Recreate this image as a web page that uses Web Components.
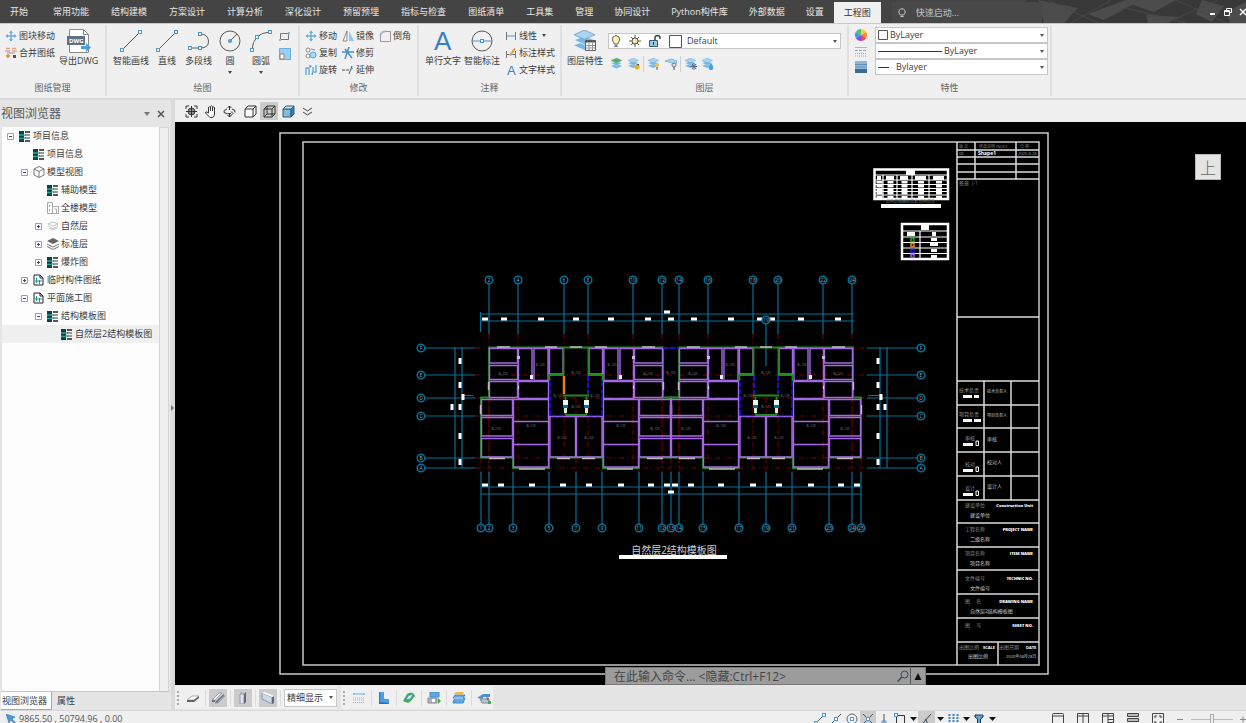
<!DOCTYPE html>
<html lang="zh-CN">
<head>
<meta charset="utf-8">
<title>结构施工图</title>
<style>
html,body{margin:0;height:100%;background:#f0f0f0}
body{font:9px/12px "Open Sans","Noto Sans CJK SC",sans-serif;color:#3c3c3c;overflow:hidden}
</style>
</head>
<body>
<cad-app></cad-app>
<script>
const BASE = `*{box-sizing:border-box}
button,input,select{font:inherit;color:inherit;border:0;background:none;margin:0;padding:0;outline:0;border-radius:0}
svg{display:block}`;

function define(name, css, html, setup) {
  customElements.define(name, class extends HTMLElement {
    constructor() { super(); this.attachShadow({mode: 'open'}); }
    connectedCallback() {
      const body = typeof html === 'function' ? html(this) : html;
      this.shadowRoot.innerHTML = `<style>${BASE}${css}</style>${body}`;
      if (setup) setup(this);
    }
  });
}

/* ---------- icons: [width, height, markup] ---------- */
const B = '#4a9ad4', G = '#5a5a5a';
const node = (x, y) => `<rect x="${x-1.5}" y="${y-1.5}" width="3" height="3" fill="#fff" stroke="${B}"/>`;
const layers = (s, a='#a8d4f0', b='#76b8e6') => `<g transform="scale(${s})"><path d="M0 16l11-4 11 4-11 5z" fill="${b}"/><path d="M0 10.500l11-4 11 4-11 5z" fill="${b}" stroke="#f0f0f0" stroke-width=".8"/><path d="M0 5l11-5 11 5-11 5z" fill="${a}" stroke="#5f9cc8" stroke-width=".8"/></g>`;
const tealList = `<g><rect x="0" y="0" width="5" height="11" fill="#0e3f44"/><path d="M0 4h5M0 7.500h5" stroke="#2aa39a" stroke-width="1.500"/><path d="M6 1h5M6 10h5" stroke="#222" stroke-width="1.500"/><path d="M6 4h5M6 7h5" stroke="#9a9a9a" stroke-width="2"/><path d="M4 4h3M4 7h3" stroke="#138a84"/></g>`;
const cube = `<path d="M1 4h8v8H1zM1 4l3-3h8l-3 3M12 1v8l-3 3" fill="none" stroke="#333"/>`;
const ICONS = {
  move: [12,12,`<path d="M6 1v10M1 6h10" stroke="#6aaee0" stroke-width="1.500"/><path d="M4 3l2-2.500L8 3zM4 9l2 2.500L8 9zM3 4L.5 6 3 8zM9 4l2.500 2L9 8z" fill="#6aaee0"/>`],
  merge: [12,12,`<path d="M1 1.500h4M7 1.500h4M0 4h5M7 4h5" stroke="#e8a090" stroke-width="1.500"/><path d="M2 6h8" stroke="#999"/><path d="M1 9h4M3 7v4" stroke="#d89020" stroke-width="1.500"/><path d="M8 8h3v3H8z" fill="#555"/>`],
  dwg: [24,25,`<path d="M2.500.5h14l5 5v18h-19z" fill="#fff" stroke="#8a8a8a"/><path d="M16.500.5v5h5" fill="none" stroke="#8a8a8a"/><rect x="0" y="7" width="18" height="9" fill="#5f7186"/><text x="2" y="14" font-size="6" font-weight="700" fill="#fff" font-family="Open Sans">DWG</text><path d="M14 17h5v-3l5 4.500-5 4.500v-3h-5z" fill="#4a9fe4"/>`],
  line: [22,22,`<path d="M2 20L20 2" stroke="${G}"/>${node(2,20)}${node(20,2)}`],
  pline: [22,22,`<path d="M2 18h10M12 4q8 0 8.500 7T12 18" fill="none" stroke="${G}"/>${node(12,4)}${node(2,18)}${node(12,18)}`],
  circle: [22,22,`<circle cx="11" cy="11" r="10" fill="none" stroke="${G}"/><path d="M11 11l7-7" stroke="${G}"/><circle cx="11" cy="11" r="2" fill="${B}"/>`],
  arc: [22,22,`<path d="M2 20Q3 3 20 2" fill="none" stroke="${G}"/>${node(2,20)}${node(7,7)}${node(20,2)}`],
  rect: [12,12,`<path d="M1.500 3.500h8v6h-8z" fill="none" stroke="#777"/><path d="M9 2h2v2H9zM0 9h2v2H0z" fill="#8ab8d8"/>`],
  region: [12,12,`<path d="M.5.5h11v11H.5z" fill="#9ad0f4" stroke="#6aaee0"/><path d="M1 6h4v5H1z" fill="#fff" stroke="#888"/>`],
  mirror: [12,12,`<path d="M5 1v10H1z" fill="#fff" stroke="#888"/><path d="M7 1v10h5z" fill="#8fc8f0"/>`],
  fillet: [12,12,`<path d="M1.500 11.500V6Q2 2 7 1.500h4.500v10z" fill="none" stroke="#999"/><path d="M1 6Q1 1 7 1" fill="none" stroke="#7ab8e8"/>`],
  copy: [12,12,`<circle cx="3" cy="3" r="2" fill="#fff" stroke="#888"/><circle cx="3" cy="9" r="2" fill="#fff" stroke="#888"/><circle cx="8" cy="8" r="3" fill="#a8d8f8" stroke="#5aa4dc"/><path d="M6 2l4 1" stroke="${B}"/>`],
  trim: [12,12,`<path d="M0 5h12M7 0l-4 12M3 2l7 9" stroke="#4a90cc" stroke-width="1.500"/>`],
  rotate: [12,12,`<path d="M1 11V4h3v7M11 1v7H8V3" fill="none" stroke="#6aaee0" stroke-width="1.500"/><path d="M4 1l3 1-2 2zM8 11l-2-1 2-2z" fill="#4a90cc"/>`],
  extend: [12,12,`<path d="M0 6h3M4 6h3M10 2L7 10" stroke="#555"/><path d="M8 6l3-2" stroke="${B}"/>`],
  bigA: [22,24,`<text x="2" y="21" font-size="26" fill="#3480c8" font-family="Liberation Sans">A</text>`],
  smallA: [12,12,`<text x="2" y="11" font-size="13" fill="#3480c8" font-family="Liberation Sans">A</text>`],
  smartdim: [22,22,`<circle cx="11" cy="11" r="10" fill="none" stroke="${G}"/><path d="M1 11h20" stroke="${B}"/>${node(11,11)}`],
  linear: [12,12,`<path d="M1.500 2v8M10.500 2v8" stroke="#777"/><path d="M2 6h8" stroke="${B}"/>`],
  dimstyle: [12,12,`<path d="M1.500 4v7M10.500 4v7M2 7.500h8" stroke="#777"/><path d="M4 8l5-7 2 1-5 7z" fill="#e8a050"/>`],
  layerprops: [22,22,`${layers(.95)}<path d="M11.500 10.500h10v10h-10z" fill="#fff" stroke="#666"/><path d="M11 11.500h11" stroke="#555" stroke-width="2"/><path d="M15 12v8M18.500 12v8M12 15.500h9M12 18h9" stroke="#999"/>`],
  ly1: [12,12,layers(.5,'#58b060')],
  ly2: [12,12,layers(.48)+`<circle cx="9" cy="9" r="2.500" fill="#e8b020"/><path d="M8 6h3v2" fill="#555"/>`],
  ly3: [12,12,layers(.48)+`<circle cx="9" cy="7" r="2" fill="#f0c040"/><path d="M9 9v3" stroke="#555"/>`],
  ly4: [12,12,`<path d="M0 3l6-2 6 2-1 3-4-1z" fill="#a8d4f0" stroke="#88b8dc"/><circle cx="9" cy="7" r="2" fill="#dfeaf2" stroke="#678"/><path d="M9 9v3" stroke="#555"/>`],
  ly5: [12,12,layers(.48)+`<path d="M9 5v7M5.500 8.500h7M7 6l4 5M11 6l-4 5" stroke="#4a6a90"/>`],
  ly6: [12,12,layers(.48)+`<path d="M9 5q4 5 1 7h-2q-3-2 1-7z" fill="#48a0e0"/>`],
  bulb: [10,12,`<path d="M3 8Q0 5 2 2q3-3 6 0 2 3-1 6v1H3z" fill="#fdf0b8" stroke="#666"/><path d="M3.500 11h3" stroke="#555" stroke-width="1.500"/>`],
  sun: [12,12,`<path d="M6 0v12M0 6h12M2 2l8 8M10 2l-8 8" stroke="#555"/><circle cx="6" cy="6" r="3" fill="#ffe9a0" stroke="#555"/>`],
  unlock: [12,12,`<path d="M.5 5.500h8v6h-8z" fill="#8fcdf0" stroke="#456"/><path d="M6 5V3q0-2.500 2.500-2.500T11 3v1" fill="none" stroke="#345" stroke-width="1.500"/><path d="M4.500 7v3" stroke="#234"/>`],
  swatch: [13,13,`<path d="M.5.5h12v12H.5z" fill="#fff" stroke="#555"/>`],
  swatchs: [10,10,`<path d="M.5.5h9v9h-9z" fill="#fff" stroke="#555"/>`],
  wheel: [12,12,`<path d="M6 6V0a6 6 0 0 1 5.200 3z" fill="#f0d040"/><path d="M6 6l5.200-3a6 6 0 0 1 0 6z" fill="#f09030"/><path d="M6 6l5.200 3A6 6 0 0 1 6 12z" fill="#f04858"/><path d="M6 6v6A6 6 0 0 1 .8 9z" fill="#9048e0"/><path d="M6 6L.8 9a6 6 0 0 1 0-6z" fill="#30a0e8"/><path d="M6 6L.8 3A6 6 0 0 1 6 0z" fill="#50c070"/>`],
  ltype: [12,12,`<path d="M0 2.500h12" stroke="#aab8c4"/><path d="M0 5.500h12" stroke="#9ab" stroke-dasharray="3 1"/><path d="M0 8.500h12M0 11h12" stroke="#9ab" stroke-dasharray="1 1"/>`],
  lweight: [12,12,`<path d="M0 0h12v12H0z" fill="#8fb8d8"/><path d="M0 3.500h12M0 6h12" stroke="#5f90b8"/><path d="M0 9h12M0 11h12" stroke="#3a6a98" stroke-width="2"/>`],
  zoomext: [13,13,`<path d="M1 4V1h3M9 1h3v3M12 9v3H9M4 12H1V9M6.500 1v11M1 6.500h11" fill="none" stroke="#333"/><circle cx="6.500" cy="6.500" r="3.500" fill="none" stroke="#333"/><path d="M4 4h5v5H4z" fill="#333" opacity=".5"/>`],
  hand: [13,13,`<path d="M4.500 8V2.500q1-1.500 2 0V6 1.500q1-1.500 2 0V6 2.500q1.500-1 2 0V9q0 3-2.500 3.500H6L1.500 8q0-1.500 1.500-1z" fill="#fff" stroke="#333"/>`],
  orbit: [13,13,`<path d="M6.500 1v4M6.500 8v4M4.500 3l2-2 2 2M4.500 10l2 2 2-2M4 4Q0 5 1 7.500q3 2 7 1M9 4q4 1 3 3.500" fill="none" stroke="#333"/><path d="M8 6.500l2 2-2 2" fill="none" stroke="#333"/>`],
  cube: [13,13,cube.replace('fill="none"','fill="#fff"')],
  wire: [13,13,cube+`<path d="M4 1v8h8M4 9l-3 3" fill="none" stroke="#333"/>`],
  solid: [13,13,`<path d="M1 4h8v8H1z" fill="#7fbddc" stroke="#2f5f80"/><path d="M1 4l3-3h8l-3 3z" fill="#c0e0f0" stroke="#2f5f80"/><path d="M12 1v8l-3 3V4z" fill="#3a80a8" stroke="#2f5f80"/>`],
  more: [13,13,`<path d="M2 3l4.500 3L11 3M2 7l4.500 3L11 7" fill="none" stroke="#444"/>`],
  list: [11,11,tealList],
  cubes: [12,12,`<path d="M1 3l5-2.500L11 3v6l-5 2.500L1 9zM1 3l5 2.500L11 3M6 5.500V11" fill="#fff" stroke="#777"/>`],
  building: [12,12,`<path d="M.5.5h5v11h-5zM5.500 4.500h6v7h-6zM7.500 7h2v4M2.500 3v2M2.500 7v2" fill="none" stroke="#aaa"/>`],
  natural: [12,12,`<path d="M1 4l5-2 5 2-5 2zM1 6l5 3 5-3M2 8l4 2 4-2" fill="none" stroke="#c4c4c4"/>`],
  std: [12,12,`<path d="M0 3l6-3 6 3-6 3z" fill="#666"/><path d="M0 6l6 3 6-3M0 8.500l6 3 6-3" fill="none" stroke="#777"/>`],
  doc: [11,12,`<path d="M1 1h6l3 3v7H1z" fill="#fff" stroke="#222"/><path d="M7 1v3h3" fill="none" stroke="#222"/><path d="M3.500 4v5M2 7h7M6.500 6v4" stroke="#1a9a90"/>`],
  minus: [7,7,`<path d="M.5.5h6v6h-6z" fill="#fff" stroke="#a0a0a0"/><path d="M2 3.500h3" stroke="#2a4aa0"/>`],
  plus: [7,7,`<path d="M.5.5h6v6h-6z" fill="#fff" stroke="#a0a0a0"/><path d="M2 3.500h3M3.500 2v3" stroke="#2a4aa0"/>`],
  bulbo: [8,10,`<path d="M2.500 7Q0 5 1 2.500q3-3.500 6 0Q8 5 5.500 7z" fill="none" stroke="#ccc"/><path d="M2.500 8.500h3" stroke="#ccc"/>`],
  slab: [14,12,`<path d="M1 8l5-4h7L8 8z" fill="#fff" stroke="#aaa"/><path d="M1 8h7l5-4v2L8 10H1z" fill="#666"/>`],
  beam: [14,12,`<path d="M1 8L8 1h3L4 8zM4 11l7-7h3l-7 7z" fill="#f4f4f4" stroke="#8a919a" stroke-width=".8"/><path d="M1 8h3v2H1zM4 10l9-8v2l-7 7z" fill="#6a7480"/>`],
  column: [14,12,`<path d="M4 2l2-2h4L9 2z" fill="#fff" stroke="#999"/><path d="M4 2h4v10H4z" fill="#dde3ea" stroke="#99a"/><path d="M8 2l2-2v10l-2 2z" fill="#667"/>`],
  wall: [14,12,`<path d="M1 1l10 4v7L1 7z" fill="#cdd9e4" stroke="#89a"/><path d="M11 5l2-1v7l-2 1z" fill="#5a6a7a"/><path d="M1 1l2-1 10 4-2 1z" fill="#fff"/>`],
  t1: [14,12,`<path d="M1 2h12M2 1v2M12 1v2" stroke="#6ab0e8"/><path d="M1 6h12M1 8h12M1 10.500h12" stroke="#aaa" stroke-dasharray="1 1"/>`],
  t2: [14,12,`<path d="M2 0h5v6q0 1 1 1h4v4H2z" fill="#4a9ee8"/><path d="M2 0l1 1v9l9 1v1H2z" fill="#2f6fb8"/>`],
  t3: [14,12,`<path d="M1 9L5 2q4-3 7 0l1 2-5 6q-3 2-7-1z" fill="#40b050"/><path d="M4 8l2-4q3-2 5-1L8 7z" fill="#e8f4ff" stroke="#4a90d8"/>`],
  t4: [14,12,`<path d="M3 0h9v5H3z" fill="#5aa8e8" stroke="#4a88c4"/><path d="M1 6h9v5H1z" fill="#a8b4be" stroke="#889"/><path d="M11 6l3 3-3 3z" fill="#3fae50"/><path d="M5 7h3v3H5z" fill="#fff"/>`],
  t5: [14,12,`<path d="M1 10l2-4h10l-2 5H1zM1 6l2-3h10l-2 3z" fill="#5aa8e8" stroke="#4a88c4"/><path d="M2 2l2-2h8l-2 3z" fill="#f0b840"/><path d="M2 6h9" stroke="#dff0fc"/>`],
  t6: [14,12,`<path d="M0 6l6-4h7v3H6v2z" fill="#4a90d8"/><path d="M3 7h9v4H5z" fill="#b4c8d8" stroke="#789"/><path d="M9 5l3 1-1 3z" fill="#d04030"/><path d="M11 9h3v3h-3z" fill="#3fae50"/>`],
  cursor: [10,10,`<path d="M0 0l9 3-3 2 4 4-1 1-4-4-2 3z" fill="#4a9ad8" stroke="#2f6aa0" stroke-width=".5"/>`],
  s1: [12,12,`<path d="M2 10l8-8" stroke="#555"/>${node(10,2)}${node(2,10)}`],
  s2: [12,12,`<path d="M1 11L11 1" stroke="#555"/>${node(6,6)}`],
  s3: [12,12,`<circle cx="6" cy="6" r="5" fill="none" stroke="#666"/>${node(6,6)}`],
  s4: [12,12,`<path d="M1 1l10 10M11 1L1 11" stroke="#456"/>${node(6,6)}`],
  s5: [12,12,`<path d="M0 10.500h12M6 1v9" stroke="#555"/><path d="M4 8h4v3H4z" fill="none" stroke="${B}"/>`],
  s6: [12,12,`<path d="M3 2.500h7.500V11M2.500 3v9" fill="none" stroke="#333"/>${node(2,2)}`],
  s7: [12,12,`<path d="M1 10.500h11M2 10l8-9M6 10Q6 7 4 6" fill="none" stroke="#345"/>`],
  s8: [12,12,`<path d="M2.500 1v11M6.500 1v11M10.500 1v11" stroke="#3a86c0" stroke-width="2" stroke-dasharray="2 1"/>`],
  s9: [12,12,`<path d="M2 2h8v2L7.500 6v6h-3V6L2 4z" fill="#5aa8e0" stroke="#234"/>`],
  down: [7,4,`<path d="M0 0h7L3.500 4z" fill="#111"/>`],
  v1: [12,14,`<path d="M.5 14V2.500q0-1 1-1h9q1 0 1 1V14M1 4h10" fill="none" stroke="#444"/>`],
  v2: [12,14,`<path d="M.5 14V1.500h11V14M6 2v13M1 4h10" fill="none" stroke="#444"/>`],
  v3: [12,14,`<path d="M.5 14V1.500h11V14M6 2v13M1 4h10M6 7.500h6M6 10.500h6" fill="none" stroke="#444"/>`],
  v4: [12,14,`<path d="M.5 1.500h11v3H.5zM.5 6.500h11v3H.5zM.5 11.500h11v3H.5z" fill="#bbb" stroke="#444"/>`],
  v5: [12,14,`<path d="M.5 1.500h11v13H.5z" fill="none" stroke="#444"/><path d="M3 6V4h2M7 4h2v2M9 9v2H7M5 11H3V9" fill="none" stroke="#333"/>`],
  less: [6,7,`<path d="M0 3.500h6" stroke="#888"/>`],
  add: [6,7,`<path d="M0 3.500h6M3 .5v6" stroke="#888"/>`],
  search: [12,12,`<circle cx="7.500" cy="4.500" r="3.500" fill="none" stroke="#3a4660"/><path d="M5 7l-4.500 4.500" stroke="#3a4660" stroke-width="1.500"/>`],
  up: [10,9,`<path d="M5 1l3.500 7h-7z" fill="#111"/>`],
  min: [10,9,`<path d="M2 7h5" stroke="#fff" stroke-width="2"/>`],
  restore: [8,8,`<path d="M2.500 2V.5h5v4H6M.5 2.500h5v5h-5zM.5 3.500h5" fill="none" stroke="#fff"/>`],
  close: [8,8,`<path d="M1 1l6 6M7 1L1 7" stroke="currentColor" stroke-width="1.500"/>`],
};
define('ui-icon', ':host{display:block;flex:none}', el => {
  const [w, h, m] = ICONS[el.getAttribute('name')];
  return `<svg width="${w}" height="${h}" viewBox="0 0 ${w} ${h}" aria-hidden="true">${m}</svg>`;
});

/* ---------- buttons ---------- */
define('tool-button', `:host{display:block;flex:none}
button{display:flex;align-items:center;gap:2px;height:17px;white-space:nowrap}
.drop{width:0;height:0;border:2px solid transparent;border-top:3px solid #444;border-bottom:0;margin-left:3px}
:host([big]) button{flex-direction:column;height:50px;gap:0}
:host([big]) .pic{height:28px;display:flex;align-items:center;justify-content:center}
:host([big]) .drop{margin:4px 0 0}`, el => {
  const l = el.getAttribute('label');
  return `<button><span class="pic"><ui-icon name="${el.getAttribute('icon')}"></ui-icon></span><span>${l}</span>${el.hasAttribute('drop') ? '<i class="drop"></i>' : ''}</button>`;
});
define('icon-button', `:host{display:block;flex:none;width:18px;height:18px}
button{display:flex;width:100%;height:100%;align-items:center;justify-content:center}
:host([on]){background:#cbcbcb}`, el =>
  `<button aria-label="${el.getAttribute('label')}"><ui-icon name="${el.getAttribute('icon')}"></ui-icon></button>`);

/* ---------- drop-down: the slot holds what is drawn before the value ---------- */
define('drop-down', `:host{display:grid;align-items:center;background:#fff;border:1px solid #c6c6c6;height:16px}
.lead{display:flex;align-items:center;padding-left:2px;pointer-events:none;z-index:1}
select{appearance:none;width:100%;height:100%;padding-left:var(--indent,4px);padding-right:10px}
i{justify-self:end;margin-right:3px;border:2px solid transparent;border-top:3px solid #555;border-bottom:0;pointer-events:none}
span,select,i{grid-area:1/1}`, el =>
  `<span class="lead"><slot></slot></span><select aria-label="${el.getAttribute('label')}"><option>${el.getAttribute('value')}</option></select><i></i>`);

/* ---------- title bar ---------- */
const MENU = ['开始','常用功能','结构建模','方案设计','计算分析','深化设计','预留预埋','指标与检查','图纸清单','工具集','管理','协同设计','Python构件库','外部数据','设置','工程图'];
define('title-bar', `:host{display:flex;height:24px;background:#444;color:#e8e8e8;position:relative;flex:none;border-bottom:1px solid #c8c8c8}
nav{display:flex;flex:none;z-index:1}
nav button{padding:1px 11px 0;white-space:nowrap}
nav button:first-child{padding:1px 14px 0 10px}
nav button:nth-child(n+11){padding-right:10px}
nav button.on{background:#f0f0f0;color:#333;margin-top:2px;padding:0 10px}
.bg{position:absolute;right:0;top:0;height:23px;width:420px}
label{display:flex;align-items:center;gap:10px;background:#484848;width:150px;margin:2px auto 0 11px;padding-left:6px;z-index:1}
input{width:110px;color:#ddd}input::placeholder{color:#c4c4c4;opacity:1}
.win{display:flex;align-items:center;gap:0;z-index:1;margin-right:-4px}
.win button{width:15px;height:15px;display:flex;align-items:center;justify-content:center;color:#fff}`,
`<svg class="bg" viewBox="0 0 420 23" preserveAspectRatio="none"><rect width="420" height="23" fill="#444"/><rect x="200" width="220" height="23" fill="#383838"/><g fill="#4c4c4c"><path d="M212 0l40 8-14 15h-20zM262 14l38-14 8 4-30 16zM300 0h50l-22 12-18-6zM320 15l34 2-12 6h-20zM376 0l22 6-12 16-16-8zM400 12l20-10v21h-16z"/></g><g stroke="#484848" fill="none"><path d="M222 0l50 23M245 23L285 0M300 8l60 15M350 0l50 23M340 23L392 0"/></g></svg>
<nav>${MENU.map(m => `<button class="${m === '工程图' ? 'on' : ''}">${m}</button>`).join('')}</nav>
<label><ui-icon name="bulbo"></ui-icon><input placeholder="快速启动..." aria-label="快速启动"></label>
<div class="win"><button aria-label="最小化"><ui-icon name="min"></ui-icon></button><button aria-label="还原"><ui-icon name="restore"></ui-icon></button><button aria-label="关闭"><ui-icon name="close"></ui-icon></button></div>`);

/* ---------- ribbon ---------- */
define('ribbon-group', `:host{display:flex;flex-direction:column;flex:none;height:71px;border-right:2px solid #e0e0e0;margin-top:1px}
.tools{display:flex;align-items:flex-start;padding:2px 6px 0 5px;height:56px}
h2{font:inherit;margin:0;text-align:center;color:#666;line-height:14px}`,
  el => `<div class="tools"><slot></slot></div><h2>${el.getAttribute('label')}</h2>`);
const tb = (i, l, x='') => `<tool-button icon="${i}" label="${l}" ${x}></tool-button>`;
const ib = (i, l, x='') => `<icon-button icon="${i}" label="${l}" ${x}></icon-button>`;
define('ribbon-bar', `:host{display:flex;flex:none;background:#f0f0f0;height:76px;border-bottom:2px solid #dadada;overflow:hidden}
.col{display:flex;flex-direction:column;flex:none}
.g1{width:107px}.g2{width:193px}.g3{width:119px}.g4{width:143px}.g5{width:287px}.g6{width:203px}
.g1 .col{margin-right:4px}
.draw{display:flex;gap:7px;padding-left:1px;flex:1}.draw tool-button:last-child{margin-left:2px}
.g2 .col{margin-right:-2px}
.g3 .col{margin-right:5px}.g3 .col:last-child{margin:0}
.ann{display:flex;gap:3px;padding:0 5px 0 1px}
.layers{padding:6px 0 0 5px;flex:1}
.state{display:flex;align-items:center;gap:8px}
.row{display:flex;align-items:center;padding:6px 0 0}
.row hr{width:1px;height:16px;border:0;background:#d0d0d0;margin:0 1px}
.row icon-button{width:17px}
.props{display:grid;grid-template-columns:18px 1fr;gap:0 5px;flex:1;align-items:center;justify-items:center;margin:0 -4px 0 -2px}
.props drop-down{width:100%}
.ln{height:1px;background:#333}`,
`<ribbon-group class="g1" label="图纸管理"><div class="col">${tb('move','图块移动')}${tb('merge','合并图纸')}</div>${tb('dwg','导出DWG','big')}</ribbon-group>
<ribbon-group class="g2" label="绘图"><div class="draw">${tb('line','智能画线','big')}${tb('line','直线','big')}${tb('pline','多段线','big')}${tb('circle','圆','big drop')}${tb('arc','圆弧','big drop')}</div><div class="col">${ib('rect','矩形')}${ib('region','面域')}</div></ribbon-group>
<ribbon-group class="g3" label="修改"><div class="col">${tb('move','移动')}${tb('copy','复制')}${tb('rotate','旋转')}</div><div class="col">${tb('mirror','镜像')}${tb('trim','修剪')}${tb('extend','延伸')}</div><div class="col">${tb('fillet','倒角')}</div></ribbon-group>
<ribbon-group class="g4" label="注释"><div class="ann">${tb('bigA','单行文字','big')}${tb('smartdim','智能标注','big')}</div><div class="col">${tb('linear','线性','drop')}${tb('dimstyle','标注样式')}${tb('smallA','文字样式')}</div></ribbon-group>
<ribbon-group class="g5" label="图层">${tb('layerprops','图层特性','big')}<div class="layers"><drop-down label="图层" value="Default" style="--indent:78px"><span class="state"><ui-icon name="bulb"></ui-icon><ui-icon name="sun"></ui-icon><ui-icon name="unlock"></ui-icon><ui-icon name="swatch"></ui-icon></span></drop-down>
<div class="row">${ib('ly1','图层状态')}${ib('ly2','图层置为当前')}<hr>${ib('ly3','打开图层')}${ib('ly4','关闭图层')}<hr>${ib('ly5','冻结图层')}${ib('ly6','解冻图层')}</div></div></ribbon-group>
<ribbon-group class="g6" label="特性"><div class="props"><ui-icon name="wheel"></ui-icon><drop-down label="颜色" value="ByLayer" style="--indent:14px"><ui-icon name="swatchs"></ui-icon></drop-down><ui-icon name="ltype"></ui-icon><drop-down label="线型" value="ByLayer" style="--indent:68px"><span class="ln" style="width:64px"></span></drop-down><ui-icon name="lweight"></ui-icon><drop-down label="线宽" value="Bylayer" style="--indent:20px"><span class="ln" style="width:11px"></span></drop-down></div></ribbon-group>`);

/* ---------- browser panel ---------- */
const TREE = [[0,'-','list','项目信息'],[1,'','list','项目信息'],[1,'-','cubes','模型视图'],[2,'','list','辅助模型'],[2,'','building','全楼模型'],[2,'+','natural','自然层'],[2,'+','std','标准层'],[2,'+','list','爆炸图'],[1,'+','doc','临时构件图纸'],[1,'-','doc','平面施工图'],[2,'-','list','结构模板图'],[3,'','list','自然层2结构模板图',1]];
define('tree-node', `:host{display:flex;align-items:center;height:18px;padding-left:calc(5px + 14px*var(--depth));white-space:nowrap}
:host([selected]){background:#f0f0f0}
button{width:7px;height:7px;margin-right:5px;display:block}
.pic{width:12px;margin-right:2px}`, el => {
  const s = el.getAttribute('state');
  return `<button aria-label="展开" ${s ? '' : 'tabindex="-1"'}>${s ? `<ui-icon name="${s === '+' ? 'plus' : 'minus'}"></ui-icon>` : ''}</button><span class="pic"><ui-icon name="${el.getAttribute('icon')}"></ui-icon></span><slot></slot>`;
});
define('browser-panel', `:host{display:flex;flex-direction:column;background:#e5e5e5;border-right:4px solid #dadada;border-left:1px solid #e5e5e5;position:relative}
header{display:flex;align-items:center;height:27px;color:#555;padding-right:6px}
h1{font:12px/18px "Open Sans","Noto Sans CJK SC",sans-serif;margin:0;flex:1}
.dn{border:3px solid transparent;border-top:4px solid #777;border-bottom:0;margin-right:7px}
.fold{position:absolute;right:-3px;top:50%;border:3px solid transparent;border-left:3px solid #777;border-right:0}
.view{display:flex;flex:1;margin-right:2px;border-bottom:1px solid #c4c4c4}
.tree{flex:1;background:#fdfdfd;min-width:0;overflow:hidden;margin-left:1px}
.bar{width:10px;background:#f0f0f0;border:1px solid #d6d6d6;border-bottom:0}
footer{display:flex;height:18px}
footer button{padding:0 5px;white-space:nowrap}
footer .on{background:#fdfdfd;padding:0 4px 0 1px;border-right:1px solid #aaa;border-bottom:1px solid #aaa}`,
`<header><h1>视图浏览器</h1><button class="dn" aria-label="选项"></button><button aria-label="关闭"><ui-icon name="close"></ui-icon></button></header>
<div class="view"><div class="tree">${TREE.map(([d,s,i,t,sel]) => `<tree-node style="--depth:${d}" state="${s}" icon="${i}" ${sel ? 'selected' : ''}>${t}</tree-node>`).join('')}</div><div class="bar"></div></div>
<footer><button class="on">视图浏览器</button><button>属性</button></footer><button class="fold" aria-label="折叠"></button>`);

/* ---------- CAD drawing ---------- */
function buildDrawing() {
  let o = '';
  const path = (d, c, w, x='') => { o += `<path d="${d}" fill="none" stroke="${c}" stroke-width="${w}" ${x}/>`; };
  const box = (x, y, w, h, c='#fff') => { o += `<rect x="${x}" y="${y}" width="${w}" height="${h}" fill="${c}"/>`; };
  const text = (x, y, s, t, c='#aaa', x2='') => { o += `<text x="${x}" y="${y}" font-size="${s}" fill="${c}" ${x2}>${t}</text>`; };
  const W = '#dcdcdc', T = '#06709a';

  /* sheet frame and title block */
  path('M280 133H1048V674H280zM303 142H1039V665H303z', '#c8c8c8', 1.5);
  path('M957 142V665M957 150H1039M957 157H1039M957 164H1039M957 172H1039M957 179H1039M975 142V179M1016 142V179M957 317H1039M957 381H1039M957 405H1039M957 428H1039M957 452H1039M957 476H1039M957 500H1039M984 381V500M1011 381V500M957 523H1039M957 547H1039M957 570H1039M957 594H1039M957 618H1039M957 642H1039M998 642V665', W, 1.5);
  text(959,148,4,'版 次','#777'); text(979,148,4,'修改说明 INDEX','#777'); text(1020,148,4,'日 期','#777');
  text(959,155,4,'00','#aaa'); text(978,155,5,'Shape1','#fff','font-weight="700"'); text(1018,155,4,'2020-8-28','#999');
  text(959,185,5,'签章','#999'); text(972,185,5,'J-1','#777');
  [['技术负责','技术负责人',390],['项目负责','项目负责人',414],['审核','审核',438],['校对','校对人',464],['设计','设计人',488]].forEach(([a,b,y], i) => {
    text(i < 2 ? 959 : 965, y + 2, 5, a, '#999'); text(987, y + (i > 2 ? 0 : 3), i < 2 ? 4 : 5, b, '#c4c4c4');
    box(963, y + 5, i < 2 ? 9 : 10, 3); if (i < 2) box(974, y + 5, i ? 7 : 5, 3); else path(`M976 ${y+3}h2.500v4.500h-2.500z`, '#fff', 1);
  });
  [['建设单位','Construction Unit','建设单位',507],['工程名称','PROJECT NAME','二级名称',531],['项目名称','ITEM NAME','项目名称',555],['文件编号','TECHNIC NO.','文件编号',580],['图 　名','DRAWING NAME','自然层2结构模板图',603],['图 　号','SHEET NO.','',627]].forEach(([a,b,c,y]) => {
    text(965, y, 5, a, '#888'); text(1033, y, 4, b, '#fff', 'font-weight="800" text-anchor="end"'); text(970, y + 10, 5, c, '#ccc');
  });
  text(959,649,5,'出图比例','#888'); text(983,649,4,'SCALE','#fff','font-weight="700"'); text(968,658,5,'出图比例','#ccc');
  text(999,649,5,'出图日期','#888'); text(1026,649,4,'DATE','#fff','font-weight="700"'); text(1006,658,4,'2020年08月28日','#ccc');

  /* floor table */
  path('M874.500 169.500H948V199H874.500z', '#fff', 2.5);
  path('M875 175H948M875 180H948M875 184.500H948M875 188.500H948M875 191.500H948M875 195H948M883 175V199M897 175V199M912 175V199M929 175V199', '#fff', 1.2);
  box(906,170,9,5);
  for (const [x, w] of [[877,4],[886,8],[900,8],[915,11],[933,11]]) { box(x,176,w,4); for (const y of [181,185,189,192,196]) box(x + w/2 - 2.5, y, 6, 2.5); }
  box(881,204,60,4);
  text(886,203,4,'结构层楼面标高表 结构层高','#777');
  /* legend table */
  path('M902 224H948V259H902z', '#fff', 2.5);
  path('M902 231H948M902 237H948M902 242.500H948M902 248H948M902 253.500H948M920 231V259', '#fff', 1.2);
  box(921,224,8,6); box(907,232,8,4); box(932,232,4,4); box(931,238,6,3); box(930,243,8,3); box(931,249,6,3); box(931,255,6,3);
  [['#2a9a2a',239],['#e88020',244],['#1818e0',250],['#a060e0',255]].forEach(([c,y]) => path(`M911 ${y-.5}h3v3h-3z`, c, 1.5));

  /* axes */
  const rows = [['F',348],['E',375],['D',398],['C',416],['B',458],['A',468]];
  const top = [[489,2],[518,4],[564,6],[588,8],[633,10],[662,12],[679,14],[708,16],[753,18],[778,20],[823,22],[852,24]];
  const bot = [[481,1],[489,2],[513,3],[549,5],[576,7],[602,9],[639,11],[662,12],[671,13],[679,14],[703,15],[739,17],[766,19],[792,21],[829,23],[852,24],[861,25]];
  const RED = 'stroke-dasharray="5 3 1 3"';
  rows.forEach(([,y]) => path(`M475 ${y}H868`, '#7a0000', 1, RED));
  top.forEach(([x]) => path(`M${x} 334V468`, '#7a0000', 1, RED));
  bot.forEach(([x]) => path(`M${x} 398V474`, '#7a0000', 1, RED));
  const bubble = (x, y, t) => { o += `<circle cx="${x}" cy="${y}" r="3.800" fill="#000" stroke="${T}" stroke-width="1.500"/>`; text(x, y + 2, 5, t, '#9ab', 'text-anchor="middle"'); };
  top.forEach(([x,n]) => { path(`M${x} 284V334`, T, 1.2); bubble(x, 280, n); });
  bot.forEach(([x,n]) => { path(`M${x} 472V524`, T, 1.2); bubble(x, 528, n); });
  rows.forEach(([n,y]) => { path(`M425 ${y}H475M867 ${y}H917`, T, 1.2); bubble(421, y, n); bubble(921, y, n); });
  path('M480 314H854M480 321H854M480.500 312V332M481 487H861M481 494H861M455 347V468M462 347V468M880 347V468M887 347V468M462 395.500H473M868 395.500H880', T, 1.2);
  path('M766 324V366', T, 1.2);
  const tag = (x, y) => box(x - 3, y - 1.5, 6, 3), vtag = (x, y) => box(x - 1.5, y - 3, 3, 6);
  [485,504,541,576,611,648,671,694,731,760,772,801,838].forEach(x => tag(x, 319));
  [485,501,532,563,589,621,651,667,675,691,721,753,779,811,841,857].forEach(x => tag(x, 485));
  tag(667,312); tag(671,492); bubble(766, 320, 19);
  [361,385,407,436,462].forEach(y => { vtag(460, y); vtag(878, y); });
  vtag(452,407); vtag(885,407); vtag(463,397); vtag(881,397);

  /* one half of a dwelling unit, mirrored and repeated */
  const GR = '#1f8a1f', P = '#a468e4';
  const main = o; o = '';
  path('M576 347.500H489V397.500H481V457.500H513V468H549V457.500H576', GR, 1.8);
  const rooms = [[239,251,323,294],[239,301,323,343],[239,350,323,398],[325,251,366,346],[372,251,414,346],[419,251,459,327],[325,350,416,400],[215,403,307,451],[215,458,307,513],[215,521,307,576],[311,403,416,469],[311,469,416,538],[311,538,416,606],[420,455,496,576]];
  path(rooms.map(([a,b,c,d]) => { const f = v => Math.round(v * 2 / 3) / 2; return `M${410+f(a)} ${265+f(b)}H${410+f(c)}V${265+f(d)}H${410+f(a)}z`; }).join(''), P, 1.4);
  path('M549.500 381V375H563.500V348M563 395.500H576M565.500 397V415M565.500 415H576', GR, 1.8);
  path('M550 382V415.500H565', '#1414d8', 1.6, 'stroke-dasharray="5 2"');
  path('M497 347h13M545 347h12M570 347h6M489 458.500h16M519 469h26M557 458.500h13M480.500 405v9M488.500 382v8', '#c8b8c0', 1.4);
  box(563,400,5,5,'#e8f8f8'); box(563,405,5,3,T); box(564,408,3,5,'#d8f0d8');
  box(517,356,3,3,'#c8b8f0'); box(530,375,3,4,'#eef'); box(518,386,1,3,'#ddd');
  const half = o; o = main;
  o += `<defs><g id="half">${half}</g><g id="unit"><use href="#half"/><use href="#half" transform="matrix(-1 0 0 1 1152 0)"/></g></defs><use href="#unit"/><use href="#unit" x="190"/>`;
  path('M564 376V394', '#e88010', 2.5);
  path('M588 376V394M754 376V394M778 376V394M663 348H679', '#1414d8', 2, 'stroke-dasharray="5 2"');
  path('M671 398V458', P, 2); path('M663 397.500H679', GR, 1.5);
  for (const dx of [0, 190]) [[503,374],[540,365],[576,373],[612,365],[648,374],[576,407],[558,396],[595,396],[496,429],[531,426],[562,438],[589,438],[621,426],[655,429]].forEach(([x,y]) => text(x + dx, y + 1, 3, 'B=120', '#888', 'text-anchor="middle"'));
  text(671,374,3,'B=120','#888','text-anchor="middle"');
  box(619,555,108,4);
  text(674,554,10,'自然层2结构模板图','#d0d0d0','text-anchor="middle"');
  return o;
}
define('cad-drawing', `:host{display:block;background:#000;min-height:0;position:relative;flex:1}
.sheet{width:100%;height:100%;font-family:"Open Sans","Noto Sans CJK SC",sans-serif}
.cube{position:absolute;right:25px;top:32px;width:26px;height:26px;background:#e4e4e4;border:1px solid #b8b8b8;font:16px/20px "Noto Sans CJK SC",sans-serif;font-weight:300;color:#666}
form{position:absolute;left:430px;right:320px;bottom:0;height:18px;display:flex;background:#9c9c9c;border:1px solid #777;color:#333}
input{flex:1;min-width:0;padding-left:8px;font-size:12px}
input::placeholder{color:#444;opacity:1}
form button{display:flex;align-items:center;justify-content:center;width:15px}
form .up{border-left:1px solid #555}`,
() => `<svg class="sheet" viewBox="175 122 1071 563">${buildDrawing()}</svg><button class="cube">上</button>
<form><input aria-label="命令" placeholder="在此输入命令... &lt;隐藏:Ctrl+F12&gt;"><button type="button" aria-label="搜索"><ui-icon name="search"></ui-icon></button><button type="button" class="up" aria-label="展开"><ui-icon name="up"></ui-icon></button></form>`);

define('view-toolbar', `:host{display:flex;align-items:center;height:22px;background:#efefef;padding-left:7px;gap:1px;flex:none}
.gap{margin-left:2px}`,
`${ib('zoomext','范围缩放')}${ib('hand','平移')}${ib('orbit','动态观察')}${ib('cube','三维隐藏','class="gap"')}${ib('wire','线框','on')}${ib('solid','着色')}${ib('more','更多')}`);

define('display-toolbar', `:host{display:flex;background:#e5e5e5;height:25px;flex:none;gap:4px}
div{display:flex;align-items:center;background:#f0f0f0;height:23px;margin-top:1px}
.grip{width:0;height:14px;border-left:2px dotted #aaa;margin:0 5px 0 2px}
hr{width:1px;height:16px;border:0;background:#dadada;margin:0 3px}
drop-down{width:53px;height:18px}`,
`<div><i class="grip"></i>${[['slab','板'],['beam','梁'],['column','柱'],['wall','墙']].map(([i,l],n) => ib(i,l,n ? 'on' : '')).join('<hr>')}<hr><drop-down label="显示" value="精细显示" style="--indent:2px"></drop-down></div>
<div><i class="grip"></i>${['t1','t2','t3','t4','t5','t6'].map((i,n) => ib(i,'工具' + (n + 1))).join('<hr>')}</div>`);

define('status-bar', `:host{display:block;height:13px;overflow:hidden;background:#efefef;border-top:1px solid #d8d8d8;flex:none;color:#555}
.row{display:flex;align-items:center;height:16px}
.pos{margin-left:3px}.snap{display:flex;margin-left:auto}
.snap icon-button{width:16px;height:17px}.snap .d{width:10px}
.snap .w{width:17px}
.views{display:flex;gap:7px;margin-left:52px}
.zoom{display:flex;align-items:center;margin-left:9px;margin-right:-1px}
.zoom button{width:8px;display:flex;justify-content:center}
input{appearance:none;width:42px;height:12px;margin:0 6px 0 7px;background:linear-gradient(#bbb,#bbb) center/100% 1px no-repeat}
input::-webkit-slider-thumb{appearance:none;width:4px;height:11px;background:#eee;border:1px solid #aaa}`,
`<div class="row"><ui-icon name="cursor" style="margin-left:6px"></ui-icon><span class="pos">9865.50 , 50794.96 , 0.00</span>
<div class="snap">${ib('s1','端点')}${ib('s2','中点')}${ib('s3','圆心')}${ib('s4','交点','on')}${ib('s5','垂足')}${ib('s6','正交')}${ib('down','选项','class="d"')}${ib('s7','极轴','on class="w"')}${ib('down','选项','class="d"')}${ib('s8','栅格')}${ib('down','选项','class="d"')}${ib('s9','过滤')}${ib('down','选项','class="d"')}</div>
<div class="views">${['v1','v2','v3','v4','v5'].map((i,n) => ib(i,'布局' + (n + 1))).join('')}</div>
<div class="zoom"><button aria-label="缩小"><ui-icon name="less"></ui-icon></button><input type="range" aria-label="缩放" value="50"><button aria-label="放大"><ui-icon name="add"></ui-icon></button></div></div>`);

define('cad-app', `:host{display:flex;flex-direction:column;height:100vh;overflow:hidden}
main{display:grid;grid-template-columns:175px minmax(0,1fr);flex:1;min-height:0}
section{display:flex;flex-direction:column;min-height:0}`,
`<title-bar></title-bar><ribbon-bar></ribbon-bar>
<main><browser-panel></browser-panel><section><view-toolbar></view-toolbar><cad-drawing></cad-drawing><display-toolbar></display-toolbar></section></main>
<status-bar></status-bar>`);
</script>
</body>
</html>
